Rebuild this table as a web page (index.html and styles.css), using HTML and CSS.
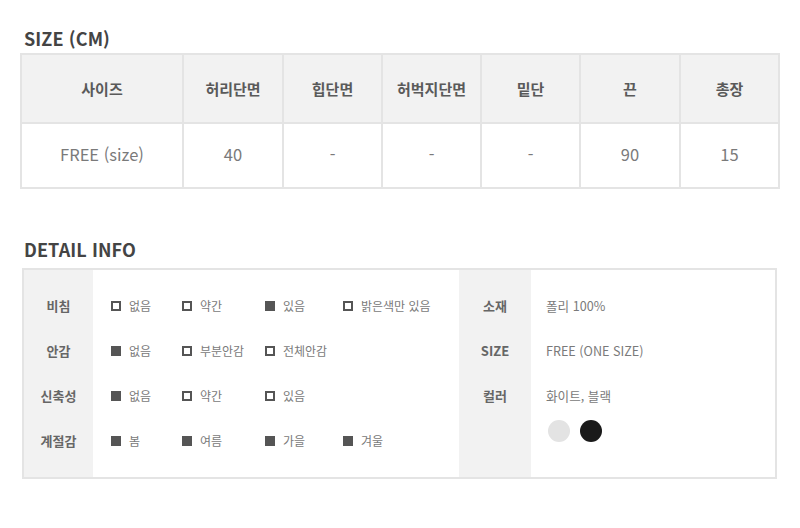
FILE: index.html
```html
<!DOCTYPE html>
<html lang="ko">
<head>
<meta charset="utf-8">
<link rel="stylesheet" href="styles.css">
</head>
<body>
<section class="sec sec-size">
  <h2 class="title">SIZE (CM)</h2>
  <table class="size-table">
    <colgroup>
      <col class="c-first"><col class="c100"><col class="c99"><col class="c99"><col class="c99"><col class="c100"><col class="c99">
    </colgroup>
    <thead>
      <tr><th>사이즈</th><th>허리단면</th><th>힙단면</th><th>허벅지단면</th><th>밑단</th><th>끈</th><th>총장</th></tr>
    </thead>
    <tbody>
      <tr><td>FREE (size)</td><td>40</td><td>-</td><td>-</td><td>-</td><td>90</td><td>15</td></tr>
    </tbody>
  </table>
</section>

<section class="sec sec-detail">
  <h2 class="title">DETAIL INFO</h2>
  <div class="detail">
    <div class="lab-col">
      <div class="row lab">비침</div>
      <div class="row lab">안감</div>
      <div class="row lab">신축성</div>
      <div class="row lab">계절감</div>
    </div>
    <div class="opt-col">
      <div class="row opts">
        <span class="opt"><i class="box"></i>없음</span>
        <span class="opt"><i class="box"></i>약간</span>
        <span class="opt"><i class="box on"></i>있음</span>
        <span class="opt"><i class="box"></i>밝은색만 있음</span>
      </div>
      <div class="row opts">
        <span class="opt"><i class="box on"></i>없음</span>
        <span class="opt"><i class="box"></i>부분안감</span>
        <span class="opt"><i class="box"></i>전체안감</span>
      </div>
      <div class="row opts">
        <span class="opt"><i class="box on"></i>없음</span>
        <span class="opt"><i class="box"></i>약간</span>
        <span class="opt"><i class="box"></i>있음</span>
      </div>
      <div class="row opts">
        <span class="opt"><i class="box on"></i>봄</span>
        <span class="opt"><i class="box on"></i>여름</span>
        <span class="opt"><i class="box on"></i>가을</span>
        <span class="opt"><i class="box on"></i>겨울</span>
      </div>
    </div>
    <div class="lab-col lab-col2">
      <div class="row lab">소재</div>
      <div class="row lab">SIZE</div>
      <div class="row lab">컬러</div>
    </div>
    <div class="val-col">
      <div class="row val">폴리 100%</div>
      <div class="row val">FREE (ONE SIZE)</div>
      <div class="row val">화이트, 블랙</div>
      <div class="swatches">
        <span class="sw sw-white"></span>
        <span class="sw sw-black"></span>
      </div>
    </div>
  </div>
</section>
</body>
</html>
```

FILE: styles.css
```css
* { box-sizing: border-box; }
html, body { margin: 0; padding: 0; background: #fff; }
body {
  font-family: "Noto Sans CJK KR", "Noto Sans", sans-serif;
  color: #777;
  width: 800px;
}
.title {
  margin: 0;
  font-size: 18px;
  font-weight: 700;
  color: #444;
  line-height: 20px;
  padding-left: 24px;
  letter-spacing: 0.1px;
}
.sec-size { padding-top: 28px; }
.sec-size .title { margin-bottom: 5px; }
.size-table {
  margin-left: 20px;
  width: 760px;
  border-collapse: collapse;
  table-layout: fixed;
}
.c-first { width: 162px; }
.c100 { width: 100px; }
.c99 { width: 99px; }
.size-table th, .size-table td {
  border: 2px solid #e4e4e4;
  text-align: center;
  padding: 0;
}
.size-table th {
  height: 69px;
  background: #f2f2f2;
  font-size: 15px;
  font-weight: 700;
  color: #5a5a5a;
}
.size-table td {
  height: 65px;
  font-size: 16.5px;
  color: #7a7a7a;
  font-weight: 400;
  padding-bottom: 3px;
}
.sec-detail { padding-top: 50px; }
.sec-detail .title { margin-bottom: 9px; }
.detail {
  margin-left: 22px;
  width: 755px;
  height: 211px;
  border: 2px solid #e4e4e4;
  display: grid;
  grid-template-columns: 69px 366px 72px 1fr;
}
.lab-col {
  background: #f2f2f2;
  padding-top: 13px;
}
.opt-col, .val-col { padding-top: 13px; }
.row {
  height: 45px;
  display: flex;
  align-items: center;
  font-size: 12.5px;
}
.lab {
  justify-content: center;
  font-weight: 700;
  font-size: 13px;
  color: #666;
}
.opts {
  display: grid;
  grid-template-columns: 71px 83px 78px auto;
  padding-left: 18px;
  align-items: center;
}
.opt {
  display: flex;
  align-items: center;
  font-size: 12px;
  color: #7a7a7a;
  white-space: nowrap;
}
.box {
  display: inline-block;
  width: 10px;
  height: 10px;
  border: 2px solid #555;
  margin-right: 8px;
  flex: none;
}
.box.on { background: #555; }
.val-col { padding-left: 15px; }
.val {
  font-size: 12.6px;
  color: #7a7a7a;
}
.swatches {
  display: flex;
  gap: 10px;
  margin-top: 2px;
  padding-left: 2px;
}
.sw {
  width: 22px;
  height: 22px;
  border-radius: 50%;
  display: block;
}
.sw-white { background: #e3e3e3; }
.sw-black { background: #1a1a1a; }
```
